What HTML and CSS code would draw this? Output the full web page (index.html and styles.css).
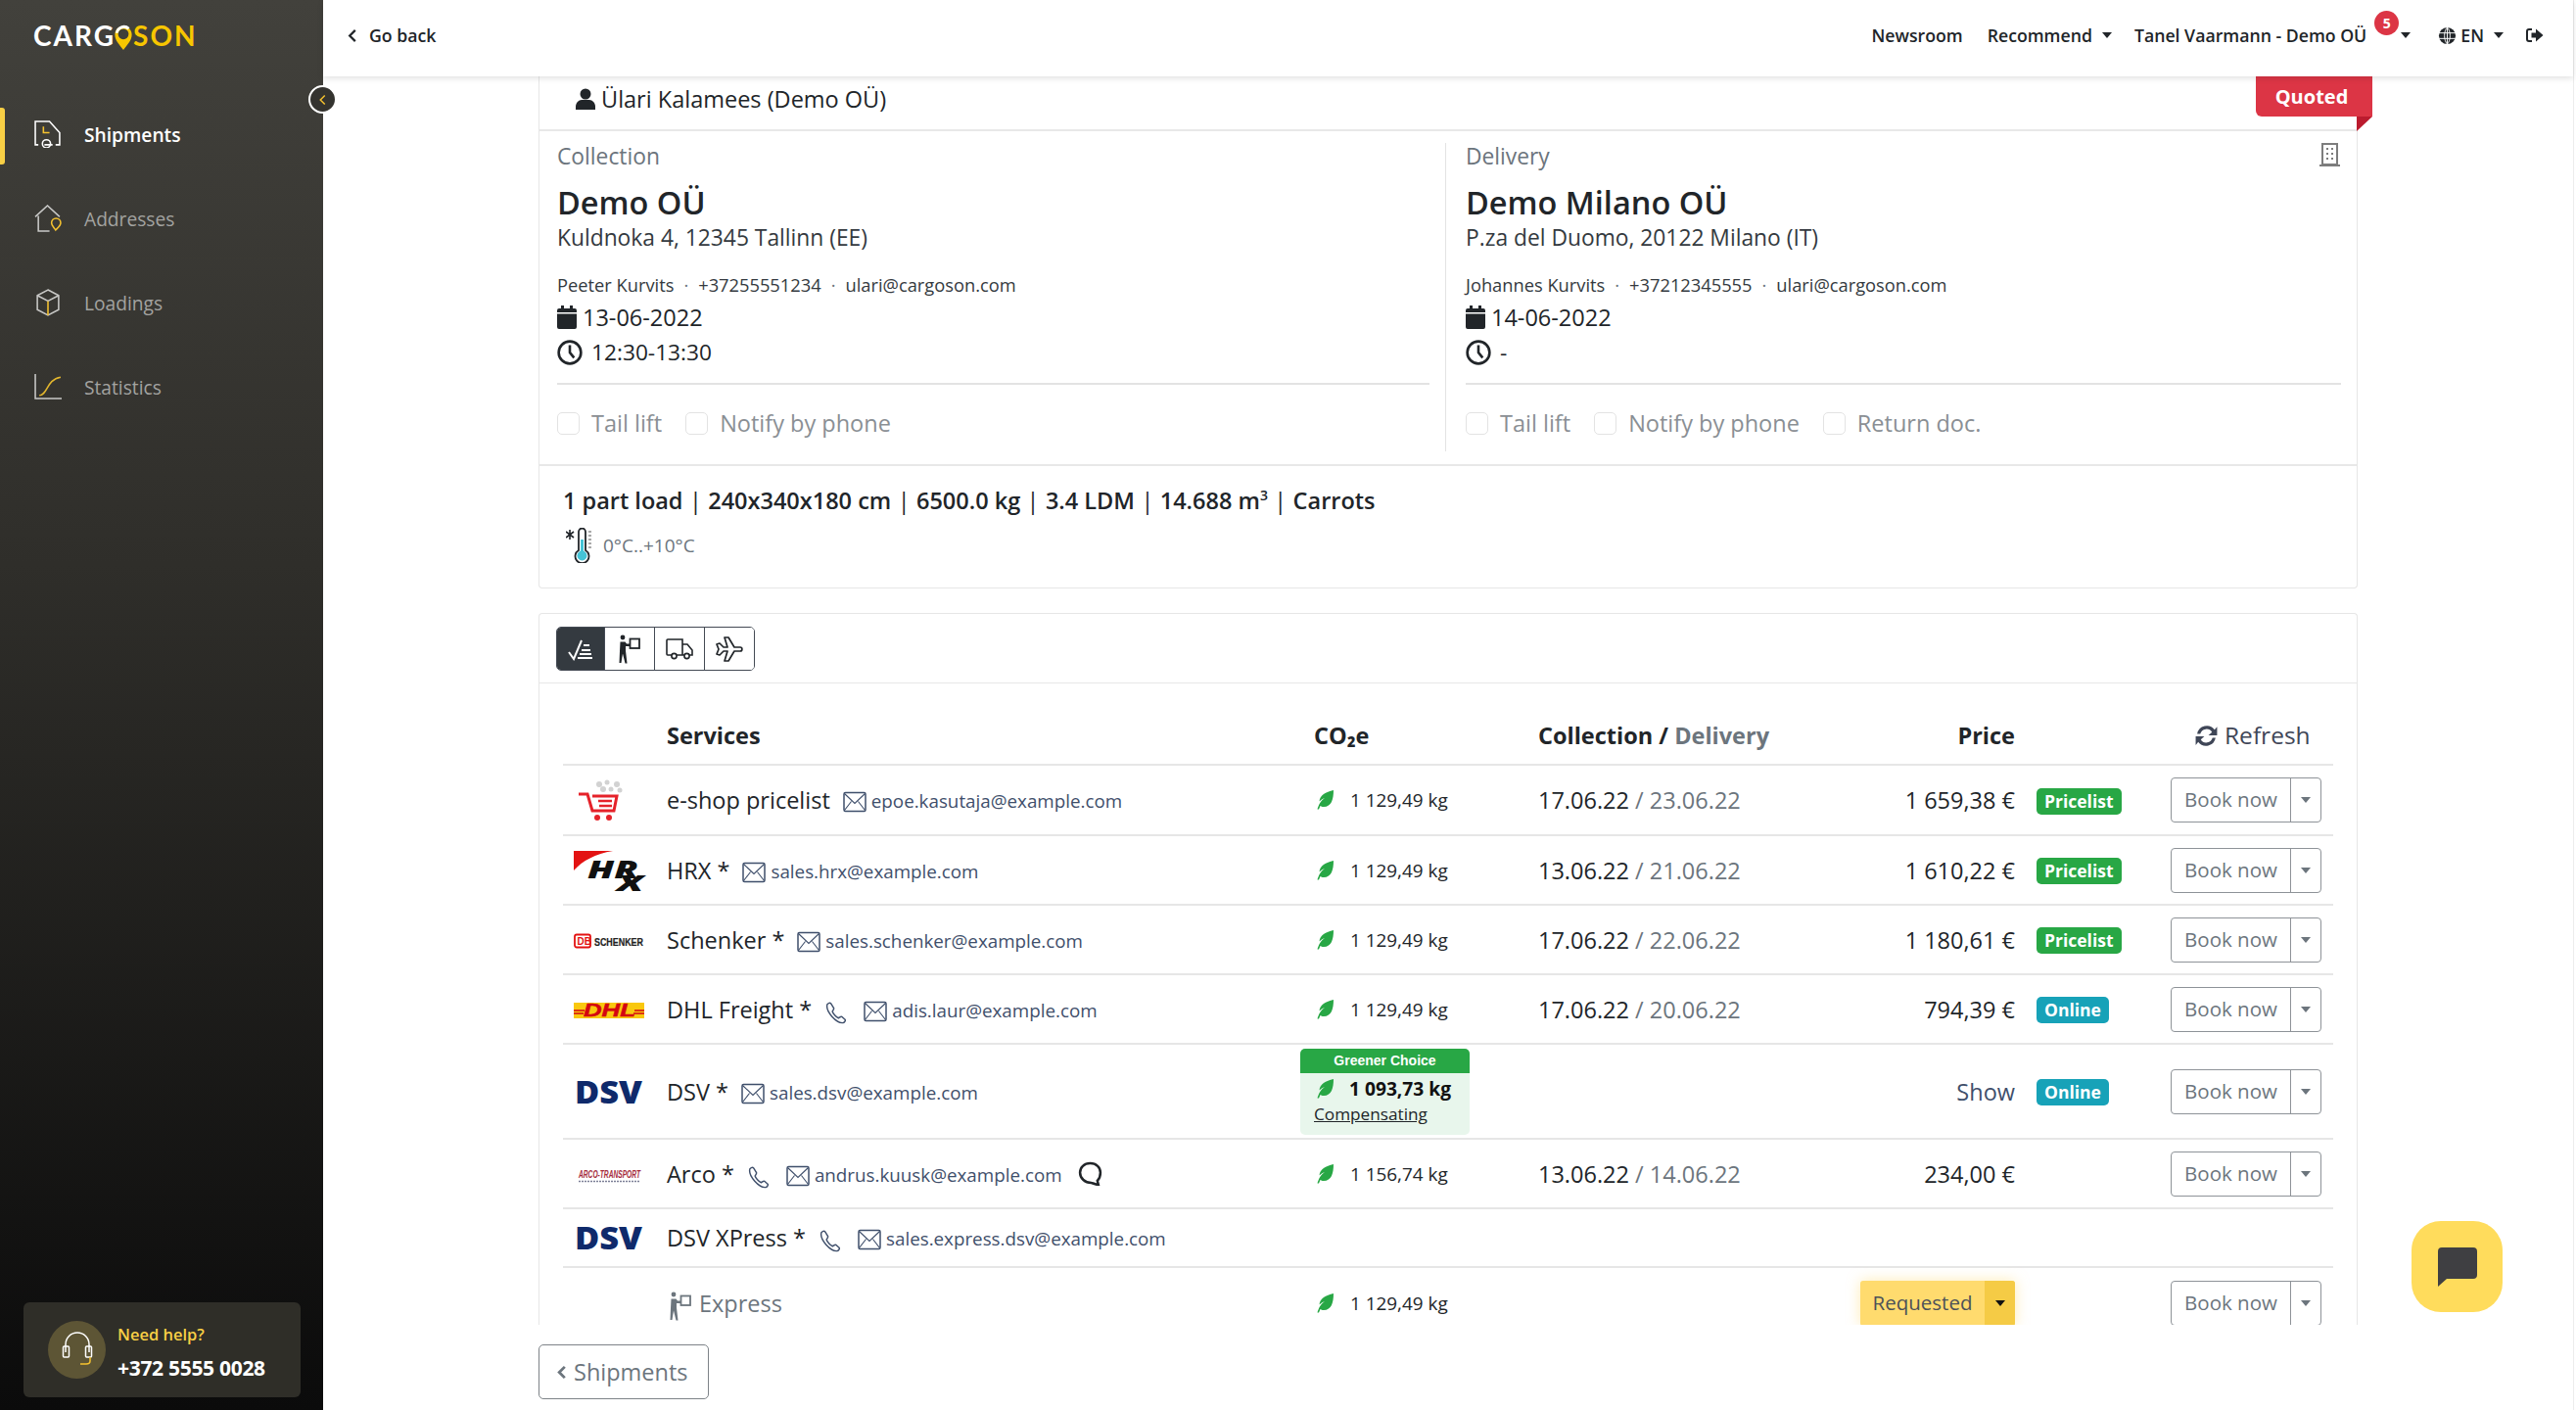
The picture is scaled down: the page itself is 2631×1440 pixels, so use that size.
FILE: index.html
```html
<!DOCTYPE html>
<html lang="en">
<head>
<meta charset="utf-8">
<title>Cargoson</title>
<link rel="stylesheet" href="styles.css">
</head>
<body>
<svg class="defs" width="0" height="0" aria-hidden="true">
  <symbol id="mail" viewBox="0 0 24 24"><rect x="1" y="2.500" width="22" height="19" rx="1.500" fill="none" stroke="currentColor" stroke-width="1.500"/><path d="M1.500 3.500l10.500 10 10.500-10M1.500 20.500l7-9M22.500 20.500l-7-9" fill="none" stroke="currentColor" stroke-width="1.100"/></symbol>
  <symbol id="phone" viewBox="0 0 24 24"><path d="M3 3.500c1-1 3-2 4-1l3 5c.5 1-1 2.500-1.500 3.500.5 2 4 6 6.500 7 1-.5 2.500-2 3.500-1.500l3.500 3c.8 1-.5 3-2 3.500C13 24 1 11 3 3.500z" fill="none" stroke="currentColor" stroke-width="1.500" stroke-linejoin="round"/></symbol>
  <symbol id="leaf" viewBox="0 0 18 20"><path d="M17 0C17 9 15 17 7 17c-1.500 0-3-.5-3.500-1C3 17 2.500 18.500 2 19.500H.5C1.500 16 3.500 11 8 8 5 9 2.500 11.500 2.500 11.500 3 5 9 2 17 0z" fill="#28a745"/></symbol>
  <symbol id="carrier" viewBox="0 0 24 30"><circle cx="5" cy="3" r="2.400" fill="currentColor"/><path d="M2.500 7.500h5l1.500 2h4v2.500H8v4.500l1.500 13H7.500L5 19.500 3.500 29H1.500l.5-12z" fill="currentColor"/><rect x="12.500" y="4.500" width="9.500" height="9.500" fill="none" stroke="currentColor" stroke-width="1.800"/></symbol>
</svg>

<aside class="sidebar">
  <div class="logo">
    <span>CARG</span><svg class="logo-pin" viewBox="0 0 20 26"><path d="M10 25C6 20 2 16 2 10.500 2 6 5.500 2.500 10 2.500s8 3.500 8 8C18 16 14 20 10 25z" fill="#f7c600"/><circle cx="10" cy="10" r="5" fill="#3f3e39"/><path d="M2.500 9A8 8 0 0 1 16 4l-2 2A5.500 5.500 0 0 0 5 9z" fill="#fff"/></svg><span class="logo-son">SON</span>
  </div>
  <nav class="nav">
    <a class="nav-item active"><svg class="nav-icon" viewBox="0 0 27 27"><path d="M4 24H1V1h14l10 11v12h-4M10 24h8" fill="none" stroke="#fff" stroke-width="1.500"/><circle cx="12" cy="23" r="4" fill="none" stroke="#fff" stroke-width="1.500"/><path d="M9 6v6h6" fill="none" stroke="#f5c22f" stroke-width="1.500"/></svg>Shipments</a>
    <a class="nav-item"><svg class="nav-icon" viewBox="0 0 27 27"><path d="M1 12L13 1l12 11M4 11v15h11" fill="none" stroke="#c9c9c7" stroke-width="1.500"/><path d="M21 25c-2-3-4-4.500-4-7a4.500 4.500 0 0 1 9 0c0 2.500-2 4-5 7z" fill="none" stroke="#f5c22f" stroke-width="1.500"/></svg>Addresses</a>
    <a class="nav-item"><svg class="nav-icon" viewBox="0 0 27 27"><path d="M13.500 1L24 6.500v14L13.500 26 3 20.500v-14zM3 6.500l10.500 5.500L24 6.500" fill="none" stroke="#c9c9c7" stroke-width="1.500"/><path d="M13.500 12v14" stroke="#f5c22f" stroke-width="1.500"/></svg>Loadings</a>
    <a class="nav-item"><svg class="nav-icon" viewBox="0 0 27 27"><path d="M1 1v24h26" fill="none" stroke="#c9c9c7" stroke-width="1.500"/><path d="M5 22c8 0 7-16 21-18" fill="none" stroke="#e2b62e" stroke-width="1.500"/></svg>Statistics</a>
  </nav>
  <div class="help">
    <div class="help-icon"><svg viewBox="0 0 34 40" width="34" height="40"><path d="M5 22V14a12 12 0 0 1 24 0v8" fill="none" stroke="#fff" stroke-width="1.500"/><rect x="2.500" y="16" width="6" height="11" rx="1" fill="none" stroke="#fff" stroke-width="1.500"/><rect x="25.500" y="16" width="6" height="11" rx="1" fill="none" stroke="#fff" stroke-width="1.500"/><path d="M30 27v4c0 2-2 3-4 3h-6" fill="none" stroke="#f5c22f" stroke-width="1.500"/></svg></div>
    <div class="help-text"><div class="help-q">Need help?</div><div class="help-num">+372 5555 0028</div></div>
  </div>
</aside>
<button class="collapse" type="button"><svg viewBox="0 0 12 16" width="9" height="12"><path d="M9 2L3 8l6 6" fill="none" stroke="#f5c22f" stroke-width="2"/></svg></button>

<div class="main">
  <header class="topbar">
    <a class="back"><svg viewBox="0 0 10 16" width="10" height="15"><path d="M8 2L2 8l6 6" fill="none" stroke="#212529" stroke-width="2.400"/></svg>Go back</a>
    <div class="top-links">
      <a class="newsroom">Newsroom</a>
      <a class="rec">Recommend<i class="caret"></i></a>
      <a class="user">Tanel Vaarmann - Demo OÜ<b class="badge-count">5</b><i class="caret"></i></a>
      <a class="lang"><svg viewBox="0 0 20 20" width="19" height="19"><circle cx="10" cy="10" r="9" fill="#212529"/><path d="M1 7h18M1 13h18M10 1v18M10 1C6 5 6 15 10 19M10 1c4 4 4 14 0 18" fill="none" stroke="#fff" stroke-width="1"/></svg>EN<i class="caret"></i></a>
      <a class="logout"><svg viewBox="0 0 18 16" width="18" height="16"><path d="M6 2H3a2 2 0 0 0-2 2v8a2 2 0 0 0 2 2h3" fill="none" stroke="#212529" stroke-width="2"/><path d="M5.500 5.500H10V1.500L17.500 8 10 14.500v-4H5.500z" fill="#212529"/></svg></a>
    </div>
  </header>

  <div class="scroll">
    <section class="card card-top">
      <div class="ribbon">Quoted</div>
      <div class="owner"><svg viewBox="0 0 20 22" width="20" height="22"><circle cx="10" cy="6" r="5.500" fill="#212529"/><path d="M0 22v-3c0-4 3-7 6-7h8c3 0 6 3 6 7v3z" fill="#212529"/></svg>Ülari Kalamees (Demo OÜ)</div>
      <div class="stops">
        <div class="stop">
          <div class="stop-label">Collection</div>
          <h2 class="stop-name">Demo OÜ</h2>
          <div class="stop-addr">Kuldnoka 4, 12345 Tallinn (EE)</div>
          <div class="stop-contact">Peeter Kurvits<span class="dot">·</span>+37255551234<span class="dot">·</span>ulari@cargoson.com</div>
          <div class="stop-line"><svg class="ico-cal" viewBox="0 0 20 24" width="20" height="24"><path d="M4 0h3v3h6V0h3v3h2a2 2 0 0 1 2 2v2H0V5a2 2 0 0 1 2-2h2zM0 8.500h20V22a2 2 0 0 1-2 2H2a2 2 0 0 1-2-2z" fill="#212529"/></svg>13-06-2022</div>
          <div class="stop-line stop-time"><svg class="ico-clock" viewBox="0 0 24 24" width="26" height="26"><circle cx="12" cy="12" r="10.500" fill="none" stroke="#212529" stroke-width="2.400"/><path d="M12 5v7l4 5" fill="none" stroke="#212529" stroke-width="2.400"/></svg>12:30-13:30</div>
          <div class="checks"><label class="check"><i class="box"></i>Tail lift</label><label class="check"><i class="box"></i>Notify by phone</label></div>
        </div>
        <div class="stop stop-right">
          <svg class="building" viewBox="0 0 21 24" width="21" height="24"><path d="M3 1h15v21H3z" fill="none" stroke="#7d7d7d" stroke-width="2"/><path d="M0 23h21" stroke="#7d7d7d" stroke-width="2"/><path d="M7 5h2v2H7zM12 5h2v2h-2zM7 10h2v2H7zM12 10h2v2h-2zM7 15h2v2H7zM12 15h2v2h-2z" fill="#7d7d7d"/></svg>
          <div class="stop-label">Delivery</div>
          <h2 class="stop-name">Demo Milano OÜ</h2>
          <div class="stop-addr">P.za del Duomo, 20122 Milano (IT)</div>
          <div class="stop-contact">Johannes Kurvits<span class="dot">·</span>+37212345555<span class="dot">·</span>ulari@cargoson.com</div>
          <div class="stop-line"><svg class="ico-cal" viewBox="0 0 20 24" width="20" height="24"><path d="M4 0h3v3h6V0h3v3h2a2 2 0 0 1 2 2v2H0V5a2 2 0 0 1 2-2h2zM0 8.500h20V22a2 2 0 0 1-2 2H2a2 2 0 0 1-2-2z" fill="#212529"/></svg>14-06-2022</div>
          <div class="stop-line stop-time"><svg class="ico-clock" viewBox="0 0 24 24" width="26" height="26"><circle cx="12" cy="12" r="10.500" fill="none" stroke="#212529" stroke-width="2.400"/><path d="M12 5v7l4 5" fill="none" stroke="#212529" stroke-width="2.400"/></svg>-</div>
          <div class="checks"><label class="check"><i class="box"></i>Tail lift</label><label class="check"><i class="box"></i>Notify by phone</label><label class="check"><i class="box"></i>Return doc.</label></div>
        </div>
      </div>
      <div class="load">
        <div class="load-main">1 part load <i>|</i> 240x340x180 cm <i>|</i> 6500.0 kg <i>|</i> 3.4 LDM <i>|</i> 14.688 m<sup>3</sup> <i>|</i> Carrots</div>
        <div class="load-temp"><svg viewBox="0 0 28 36" width="28" height="36"><path d="M4 2v10M0 4l8 6M8 4l-8 6" stroke="#212529" stroke-width="1.600"/><path d="M13 4a3.500 3.500 0 0 1 7 0v19a7 7 0 1 1-7 0z" fill="#fff" stroke="#212529" stroke-width="1.800"/><path d="M16.500 12v14" stroke="#45c3d6" stroke-width="3"/><circle cx="16.500" cy="28.500" r="5" fill="#45c3d6"/><path d="M23 4h3M23 8h3M23 12h3M23 16h3M23 20h3" stroke="#555" stroke-width="1.200"/></svg>0°C..+10°C</div>
      </div>
    </section>

    <section class="card card-table">
      <div class="toolbar">
        <div class="seg">
          <button class="seg-btn on" type="button"><svg viewBox="0 0 26 24" width="26" height="24"><path d="M1 15l5 7L14 3" fill="none" stroke="#fff" stroke-width="2"/><path d="M16 8h6M14 13h9M12 17h12M10 21h15" stroke="#fff" stroke-width="2"/></svg></button>
          <button class="seg-btn" type="button"><svg width="24" height="30"><use href="#carrier"/></svg></button>
          <button class="seg-btn" type="button"><svg viewBox="0 0 28 22" width="28" height="22"><path d="M6 17H2a1 1 0 0 1-1-1V2a1 1 0 0 1 1-1h15v16H11M17 6h5l5 6v5h-3M17 17h2" fill="none" stroke="#212529" stroke-width="1.600"/><circle cx="8.500" cy="18" r="2.600" fill="none" stroke="#212529" stroke-width="1.600"/><circle cx="21.500" cy="18" r="2.600" fill="none" stroke="#212529" stroke-width="1.600"/></svg></button>
          <button class="seg-btn" type="button"><svg viewBox="0 0 28 26" width="28" height="26"><path d="M1 8l3-1 4 4h4L9 1h4l6 10h6c2.500 0 2.500 4 0 4h-6l-6 10H9l3-10H8l-4 4-3-1 2-5z" fill="none" stroke="#212529" stroke-width="1.700" stroke-linejoin="round"/></svg></button>
        </div>
      </div>
      <div class="table">
        <div class="row row-head">
          <div class="c-logo"></div>
          <div class="c-name">Services</div>
          <div class="c-co2">CO₂e</div>
          <div class="c-date">Collection / <span class="muted">Delivery</span></div>
          <div class="c-price">Price</div>
          <div class="c-badge"></div>
          <div class="c-act refresh"><svg viewBox="0 0 24 24" width="25" height="25"><path d="M3 10A9.500 9.500 0 0 1 20 6l2.500-3v8.500H14l3.500-3A6.300 6.300 0 0 0 6 10zM21 14A9.500 9.500 0 0 1 4 18l-2.500 3v-8.500H10l-3.500 3A6.300 6.300 0 0 0 18 14z" fill="#3f4657"/></svg>Refresh</div>
        </div>

        <div class="row r72">
          <div class="c-logo"><svg class="lg" viewBox="0 0 74 44"><g fill="#d2d2d2"><circle cx="26" cy="6" r="3"/><circle cx="34" cy="4" r="2.500"/><circle cx="44" cy="6" r="3"/><circle cx="30" cy="11" r="3"/><circle cx="38" cy="11" r="2.500"/><circle cx="47" cy="12" r="2.500"/></g><path d="M5 16h9l5 17h22l3-15H19" fill="none" stroke="#e5222a" stroke-width="3"/><path d="M25 23h14M26 28h13" stroke="#e5222a" stroke-width="2.500"/><circle cx="24" cy="40" r="3" fill="#e5222a"/><circle cx="36" cy="40" r="3" fill="#e5222a"/></svg></div>
          <div class="c-name"><span class="svc">e-shop pricelist</span><svg class="i-mail"><use href="#mail"/></svg><a class="mail">epoe.kasutaja@example.com</a></div>
          <div class="c-co2"><svg class="i-leaf"><use href="#leaf"/></svg>1 129,49 kg</div>
          <div class="c-date">17.06.22 <span class="muted">/ 23.06.22</span></div>
          <div class="c-price">1 659,38 €</div>
          <div class="c-badge"><span class="tag tag-g">Pricelist</span></div>
          <div class="c-act"><div class="book"><span>Book now</span><span class="book-more"><i class="caret gray"></i></span></div></div>
        </div>

        <div class="row r71">
          <div class="c-logo"><svg class="lg" viewBox="0 0 74 44"><path d="M0 22V2h40C22 5 9 12 0 22z" fill="#e31212"/><text x="14" y="30" class="t-hrx" textLength="52" lengthAdjust="spacingAndGlyphs">HR</text><text x="44" y="43" class="t-hrxx" textLength="27" lengthAdjust="spacingAndGlyphs">X</text></svg></div>
          <div class="c-name"><span class="svc">HRX *</span><svg class="i-mail"><use href="#mail"/></svg><a class="mail">sales.hrx@example.com</a></div>
          <div class="c-co2"><svg class="i-leaf"><use href="#leaf"/></svg>1 129,49 kg</div>
          <div class="c-date">13.06.22 <span class="muted">/ 21.06.22</span></div>
          <div class="c-price">1 610,22 €</div>
          <div class="c-badge"><span class="tag tag-g">Pricelist</span></div>
          <div class="c-act"><div class="book"><span>Book now</span><span class="book-more"><i class="caret gray"></i></span></div></div>
        </div>

        <div class="row r71">
          <div class="c-logo"><svg class="lg" viewBox="0 0 74 44"><rect x="1" y="16.500" width="16" height="13" rx="2" fill="none" stroke="#e31212" stroke-width="1.800"/><text x="3.500" y="27" class="t-db">DB</text><text x="21" y="27.500" class="t-sch" textLength="50" lengthAdjust="spacingAndGlyphs">SCHENKER</text></svg></div>
          <div class="c-name"><span class="svc">Schenker *</span><svg class="i-mail"><use href="#mail"/></svg><a class="mail">sales.schenker@example.com</a></div>
          <div class="c-co2"><svg class="i-leaf"><use href="#leaf"/></svg>1 129,49 kg</div>
          <div class="c-date">17.06.22 <span class="muted">/ 22.06.22</span></div>
          <div class="c-price">1 180,61 €</div>
          <div class="c-badge"><span class="tag tag-g">Pricelist</span></div>
          <div class="c-act"><div class="book"><span>Book now</span><span class="book-more"><i class="caret gray"></i></span></div></div>
        </div>

        <div class="row r71">
          <div class="c-logo"><svg class="lg" viewBox="0 0 74 44"><rect x="0" y="15" width="72" height="16" fill="#f9c80e"/><text x="10" y="29" class="t-dhl" textLength="53" lengthAdjust="spacingAndGlyphs">DHL</text><path d="M0 23h11M0 26h10M62 23h10M61 26h11" stroke="#d40511" stroke-width="1.400"/></svg></div>
          <div class="c-name"><span class="svc">DHL Freight *</span><svg class="i-phone"><use href="#phone"/></svg><svg class="i-mail"><use href="#mail"/></svg><a class="mail">adis.laur@example.com</a></div>
          <div class="c-co2"><svg class="i-leaf"><use href="#leaf"/></svg>1 129,49 kg</div>
          <div class="c-date">17.06.22 <span class="muted">/ 20.06.22</span></div>
          <div class="c-price">794,39 €</div>
          <div class="c-badge"><span class="tag tag-b">Online</span></div>
          <div class="c-act"><div class="book"><span>Book now</span><span class="book-more"><i class="caret gray"></i></span></div></div>
        </div>

        <div class="row r97">
          <div class="c-logo"><svg class="lg" viewBox="0 0 74 44"><text x="1" y="34" class="t-dsv" textLength="69" lengthAdjust="spacingAndGlyphs">DSV</text></svg></div>
          <div class="c-name"><span class="svc">DSV *</span><svg class="i-mail"><use href="#mail"/></svg><a class="mail">sales.dsv@example.com</a></div>
          <div class="c-co2 co2-green">
            <div class="green">
              <div class="green-head">Greener Choice</div>
              <div class="green-val"><svg class="i-leaf"><use href="#leaf"/></svg>1 093,73 kg</div>
              <a class="green-link">Compensating</a>
            </div>
          </div>
          <div class="c-date"></div>
          <div class="c-price link-show">Show</div>
          <div class="c-badge"><span class="tag tag-b">Online</span></div>
          <div class="c-act"><div class="book"><span>Book now</span><span class="book-more"><i class="caret gray"></i></span></div></div>
        </div>

        <div class="row r71">
          <div class="c-logo"><svg class="lg" viewBox="0 0 74 44"><text x="5" y="26" class="t-arco" textLength="63" lengthAdjust="spacingAndGlyphs">ARCO-TRANSPORT</text><path d="M5 29.500h62" stroke="#7c7f96" stroke-width="1.500" stroke-dasharray="2 1"/></svg></div>
          <div class="c-name"><span class="svc">Arco *</span><svg class="i-phone"><use href="#phone"/></svg><svg class="i-mail"><use href="#mail"/></svg><a class="mail">andrus.kuusk@example.com</a><svg class="i-chat" viewBox="0 0 24 24"><path d="M12 2c6 0 10 4 10 9 0 4-2 7-3 8l1 4c-3 0-6-2-7-2-6 0-11-4-11-10C2 6 6 2 12 2z" fill="none" stroke="#212529" stroke-width="2.400"/></svg></div>
          <div class="c-co2"><svg class="i-leaf"><use href="#leaf"/></svg>1 156,74 kg</div>
          <div class="c-date">13.06.22 <span class="muted">/ 14.06.22</span></div>
          <div class="c-price">234,00 €</div>
          <div class="c-badge"></div>
          <div class="c-act"><div class="book"><span>Book now</span><span class="book-more"><i class="caret gray"></i></span></div></div>
        </div>

        <div class="row r60">
          <div class="c-logo"><svg class="lg" viewBox="0 0 74 44"><text x="1" y="34" class="t-dsv" textLength="69" lengthAdjust="spacingAndGlyphs">DSV</text></svg></div>
          <div class="c-name c-wide"><span class="svc">DSV XPress *</span><svg class="i-phone"><use href="#phone"/></svg><svg class="i-mail"><use href="#mail"/></svg><a class="mail">sales.express.dsv@example.com</a></div>
        </div>

        <div class="row r-last">
          <div class="c-logo"></div>
          <div class="c-name sub"><svg class="i-carrier"><use href="#carrier"/></svg>Express</div>
          <div class="c-co2"><svg class="i-leaf"><use href="#leaf"/></svg>1 129,49 kg</div>
          <div class="c-date"></div>
          <div class="c-price c-req"><div class="req"><span class="req-txt">Requested</span><span class="req-more"><i class="caret"></i></span></div></div>
          <div class="c-badge"></div>
          <div class="c-act"><div class="book"><span>Book now</span><span class="book-more"><i class="caret gray"></i></span></div></div>
        </div>
      </div>
    </section>
  </div>

  <footer class="foot">
    <a class="btn-back"><svg viewBox="0 0 10 16" width="10" height="15"><path d="M8 2L2 8l6 6" fill="none" stroke="#6c757d" stroke-width="3"/></svg>Shipments</a>
  </footer>
</div>

<button class="chat" type="button"><svg viewBox="0 0 40 40" width="40" height="40"><path d="M4 0h32a4 4 0 0 1 4 4v24a4 4 0 0 1-4 4H9l-9 8V4a4 4 0 0 1 4-4z" fill="#3f3f42"/></svg></button>
</body>
</html>
```

FILE: styles.css
```css
* { box-sizing: border-box; }
html, body { margin: 0; height: 100%; }
body {
  display: flex;
  height: 1440px;
  overflow: hidden;
  background: #fff;
  color: #212529;
  font-family: "Open Sans", "Liberation Sans", sans-serif;
  font-size: 23.5px;
}
.defs { position: absolute; }
a { color: inherit; text-decoration: none; }
button { font: inherit; cursor: pointer; }

/* Sidebar */
.sidebar {
  flex: 0 0 330px;
  height: 1440px;
  display: flex;
  flex-direction: column;
  background: linear-gradient(180deg, #42413c 0%, #2f2e2a 40%, #0b0b0b 100%);
  padding: 0 0 13px;
}
.logo {
  height: 78px;
  padding: 0 0 7px 34px;
  display: flex;
  align-items: center;
  color: #fff;
  font-family: "Lato", sans-serif;
  font-weight: 700;
  font-size: 28px;
  letter-spacing: 2px;
}
.logo-pin { width: 22px; height: 28px; margin: 5px -1px 0 -3px; }
.logo-son { color: #f7c600; }
.nav { display: flex; flex-direction: column; padding-top: 16px; flex: 1; }
.nav-item {
  height: 86px;
  padding-left: 35px;
  display: flex;
  align-items: center;
  gap: 23px;
  color: #a3a3a0;
  font-size: 19.200px;
  position: relative;
}
.nav-item.active { color: #fff; font-weight: 600; }
.nav-item.active::before {
  content: "";
  position: absolute;
  left: 0; top: 16px;
  width: 5px; height: 58px;
  background: #f8cf45;
  border-radius: 0 3px 3px 0;
}
.nav-icon { width: 28px; height: 28px; flex: none; }
.help {
  margin: 0 23px 0 24px;
  height: 97px;
  background: #2f2e28;
  border-radius: 6px;
  padding: 0 0 0 25px;
  display: flex;
  align-items: center;
  gap: 12px;
}
.help-icon {
  width: 59px; height: 59px;
  border-radius: 50%;
  background: #5d5535;
  display: flex; align-items: center; justify-content: center;
}
.help-text { padding-top: 6px; }
.help-q { color: #f8cf45; font-size: 16.500px; font-weight: 600; line-height: 24px; }
.help-num { color: #fff; font-size: 21px; font-weight: 700; line-height: 30px; margin-top: 7px; letter-spacing: -.3px; }
.collapse {
  position: absolute;
  left: 315px; top: 87px;
  width: 29px; height: 29px;
  border-radius: 50%;
  background: #34332f;
  border: 2px solid #fff;
  padding: 0;
  display: flex; align-items: center; justify-content: center;
}

/* Main */
.main {
  flex: none;
  width: 2299px;
  height: 1440px;
  border-right: 1px solid #ececec;
  display: flex;
  flex-direction: column;
}
.topbar {
  flex: none;
  height: 78px;
  display: flex;
  align-items: center;
  justify-content: space-between;
  padding: 0 30px 6px 25px;
  font-size: 17.700px;
  font-weight: 600;
  box-shadow: 0 2px 6px rgba(0,0,0,.12);
  position: relative;
  z-index: 2;
  background: #fff;
}
.back { display: flex; align-items: center; gap: 12px; }
.top-links { display: flex; align-items: center; }
.newsroom { margin-right: 25px; }
.rec { margin-right: 23px; display: flex; align-items: center; }
.user { margin-right: 28px; display: flex; align-items: center; position: relative; }
.lang { margin-right: 23px; display: flex; align-items: center; gap: 4px; }
.lang .caret { margin-left: 6px; }
.logout { display: flex; }
.caret {
  display: inline-block;
  margin-left: 10px;
  border-left: 5.500px solid transparent;
  border-right: 5.500px solid transparent;
  border-top: 6px solid #212529;
}
.caret.gray { border-top-color: #6c757d; margin: 0; }
.badge-count {
  position: absolute;
  right: 12px; top: -13px;
  width: 25px; height: 25px;
  border-radius: 50%;
  background: #dc3545;
  color: #fff;
  font-size: 14px;
  font-weight: 700;
  display: flex; align-items: center; justify-content: center;
}
.user .caret { margin-left: 35px; }

.scroll {
  flex: none;
  height: 1275px;
  overflow: hidden;
  padding: 0 220px;
}
.card {
  border: 1.500px solid #e6e6e6;
  border-radius: 4px;
  background: #fff;
}
.card-top {
  border-top: 0;
  border-radius: 0 0 4px 4px;
  height: 523px;
  position: relative;
}
.owner {
  height: 56px;
  padding: 0 0 8px 37px;
  display: flex;
  align-items: center;
  gap: 6px;
  border-bottom: 2px solid #e8e8e8;
}
.ribbon {
  position: absolute;
  top: 0; right: -16px;
  width: 119px; height: 41px;
  background: #dc3545;
  color: #fff;
  font-size: 20px;
  font-weight: 700;
  text-align: center;
  padding-right: 5px;
  line-height: 41px;
  border-radius: 0 0 0 6px;
}
.ribbon::after {
  content: "";
  position: absolute;
  right: 0; top: 41px;
  border-top: 15px solid #bb1b2e;
  border-right: 16px solid transparent;
}
.stops {
  display: grid;
  grid-template-columns: 925px 1fr;
  padding: 12px 0 13px;
  border-bottom: 2px solid #e8e8e8;
}
.stop { padding: 0 16px 0 18px; position: relative; }
.stop-right { border-left: 1.500px solid #e3e3e3; padding: 0 16px 0 20px; }
.building { position: absolute; top: 0; right: 17px; }
.stop-label { line-height: 28px; color: #6c757d; font-size: 22.800px; }
.stop-name { margin: 13px 0 0; font-size: 32.500px; font-weight: 600; line-height: 40px; }
.stop-addr { line-height: 32px; color: #343a40; font-size: 22.800px; }
.stop-contact { margin-top: 18px; font-size: 18.300px; line-height: 28px; color: #343a40; }
.dot { margin: 0 10px; color: #6c757d; }
.stop-line { display: flex; align-items: center; line-height: 36px; height: 36px; font-size: 23.500px; }
.stop-contact + .stop-line { margin-top: 1px; }
.stop-time { font-size: 22.700px; }
.ico-cal { margin-right: 6px; }
.ico-clock { margin-right: 9px; }
.checks {
  margin-top: 13px;
  border-top: 2px solid #e3e3e3;
  padding-top: 21px;
  display: flex;
  gap: 24px;
  height: 70px;
  color: #8a8f94;
}
.check { display: flex; align-items: center; gap: 12px; height: 36px; }
.box { width: 23px; height: 23px; border: 1.500px solid #e3e3e3; border-radius: 5px; }
.load { padding: 18px 0 0 24px; }
.load-main { font-weight: 600; line-height: 34px; }
.load-main i { font-style: normal; font-weight: 400; margin: 0 .3px; }
.load-main sup { font-size: 14px; line-height: 0; }
.load-temp {
  margin-top: 11px;
  height: 36px;
  display: flex;
  align-items: center;
  gap: 10px;
  padding-left: 3px;
  font-size: 19px;
  color: #6c757d;
}

.card-table { margin-top: 25px; height: 760px; border-bottom: 0; border-radius: 4px 4px 0 0; overflow: hidden; }
.toolbar { padding: 13px 17px 12px; border-bottom: 1.500px solid #e8e8e8; }
.seg { display: inline-flex; height: 45px; border: 1.500px solid #444a54; border-radius: 5px; overflow: hidden; vertical-align: top; }
.seg-btn {
  width: 51px;
  border: 0;
  border-left: 1.500px solid #444a54;
  background: #fff;
  padding: 0;
  display: flex; align-items: center; justify-content: center;
}
.seg-btn:first-child { border-left: 0; width: 48px; }
.seg-btn.on { background: #343a40; }
.seg-btn svg { color: #212529; }

.table { padding: 0 24px; }
.row {
  display: grid;
  grid-template-columns: 106px 661px 229px 329px 158px 159px 165px;
  align-items: center;
  border-bottom: 2px solid #e6e6e6;
}
.r72 { height: 72px; }
.r71 { height: 71px; }
.r97 { height: 97px; }
.r60 { height: 60px; }
.r-last { height: 72px; border-bottom: 0; }
.row-head { padding: 35px 0 11px; font-weight: 700; line-height: 36px; }
.c-logo { padding-left: 11px; display: flex; align-items: center; }
.lg { width: 74px; height: 44px; overflow: visible; }
.c-name { display: flex; align-items: center; white-space: nowrap; }
.c-wide { grid-column: 2 / 8; }
.svc { margin-right: 13px; }
.i-mail { width: 24px; height: 24px; color: #3f4f6b; margin-right: 5px; flex: none; position: relative; top: 2px; }
.i-phone { width: 23px; height: 24px; color: #3f4f6b; margin-right: 17px; flex: none; position: relative; top: 3px; }
.i-chat { width: 25px; height: 25px; margin-left: 16px; flex: none; }
.i-leaf { width: 18px; height: 20px; margin-right: 16px; flex: none; }
.i-carrier { width: 24px; height: 30px; margin: 0 7px 0 2px; color: #6c757d; position: relative; top: 3px; }
.mail { font-size: 18.800px; color: #3f4f6b; position: relative; top: 1px; }
.sub { color: #6c757d; }
.c-co2 { font-size: 18.900px; display: flex; align-items: center; padding-left: 3px; }
.row-head .c-co2 { font-size: 23.500px; padding-left: 0; }
.c-date { white-space: nowrap; }
.muted { color: #6c757d; }
.c-price { text-align: right; white-space: nowrap; }
.link-show { color: #3f4f6b; }
.c-badge { padding-left: 22px; display: flex; }
.tag {
  height: 27px;
  padding: 0 8px;
  border-radius: 5px;
  color: #fff;
  font-size: 17.500px;
  font-weight: 700;
  line-height: 27px;
  position: relative;
  top: 1px;
}
.tag-g { background: #28a745; }
.tag-b { background: #17a2b8; }
.c-act { display: flex; align-items: center; }
.refresh { color: #3f4657; font-weight: 400; gap: 6px; padding-left: 24px; font-size: 24.500px; }
.book {
  display: flex;
  width: 154px;
  height: 46px;
  border: 1.500px solid #8e9398;
  border-radius: 4px;
  color: #6c757d;
  font-size: 20.500px;
  line-height: 43px;
}
.book > span:first-child { width: 121px; text-align: center; }
.book-more {
  flex: 1;
  border-left: 1.500px solid #8e9398;
  display: flex; align-items: center; justify-content: center;
}
.co2-green { padding-left: 0; margin-left: -14px; align-self: center; }
.green {
  width: 173px;
  height: 88px;
  border-radius: 5px;
  overflow: hidden;
  background: #e8f6ec;
}
.green-head {
  height: 25px;
  background: #28a745;
  color: #fff;
  font-family: "Liberation Sans", sans-serif;
  font-size: 14px;
  font-weight: 700;
  line-height: 25px;
  text-align: center;
}
.green-val { display: flex; align-items: center; padding-left: 17px; margin-top: 3px; font-weight: 700; font-size: 19.200px; line-height: 26px; color: #111; }
.green-val .i-leaf { margin-right: 15px; }
.green-link { display: block; padding-left: 14px; margin-top: 0; font-size: 17.200px; line-height: 26px; text-decoration: underline; }
.c-req { display: flex; justify-content: flex-end; }
.req {
  display: flex;
  width: 162px;
  height: 46px;
  border-radius: 3px;
  overflow: hidden;
  background: #ffdb6e;
  box-shadow: 0 0 14px rgba(255,219,110,.5);
  font-size: 20.500px;
  line-height: 44px;
  color: #4d5158;
}
.req-txt { width: 127px; text-align: center; }
.req-more { flex: 1; background: #f5cb45; display: flex; align-items: center; justify-content: center; }
.req-more .caret { margin: 0; border-top-color: #111; }

/* Logos */
.t-hrx { font: italic 800 25px "Open Sans", sans-serif; fill: #111; }
.t-hrxx { font: italic 800 22px "Open Sans", sans-serif; fill: #111; }
.t-db { font: 700 10px "Liberation Sans", sans-serif; fill: #e31212; }
.t-sch { font: 700 10.500px "Liberation Sans", sans-serif; fill: #222; stroke: #222; stroke-width: .2px; }
.t-dhl { font: italic 700 18px "Liberation Sans", sans-serif; fill: #d40511; stroke: #d40511; stroke-width: .5px; }
.t-dsv { font: 800 31px "Open Sans", sans-serif; fill: #0f2a6b; }
.t-arco { font: italic 700 10px "Liberation Sans", sans-serif; fill: #a62b3c; }

/* Footer */
.foot { flex: none; height: 87px; padding: 20px 0 0 220px; }
.btn-back {
  display: inline-flex;
  align-items: center;
  gap: 7px;
  height: 56px;
  width: 174px;
  padding-left: 18px;
  border: 1.500px solid #7e8388;
  border-radius: 5px;
  color: #6c757d;
}

.chat {
  position: absolute;
  left: 2463px; top: 1247px;
  width: 93px; height: 93px;
  border: 0;
  border-radius: 30px;
  background: #ffdc5c;
  padding: 0;
  display: flex; align-items: center; justify-content: center;
}
```
